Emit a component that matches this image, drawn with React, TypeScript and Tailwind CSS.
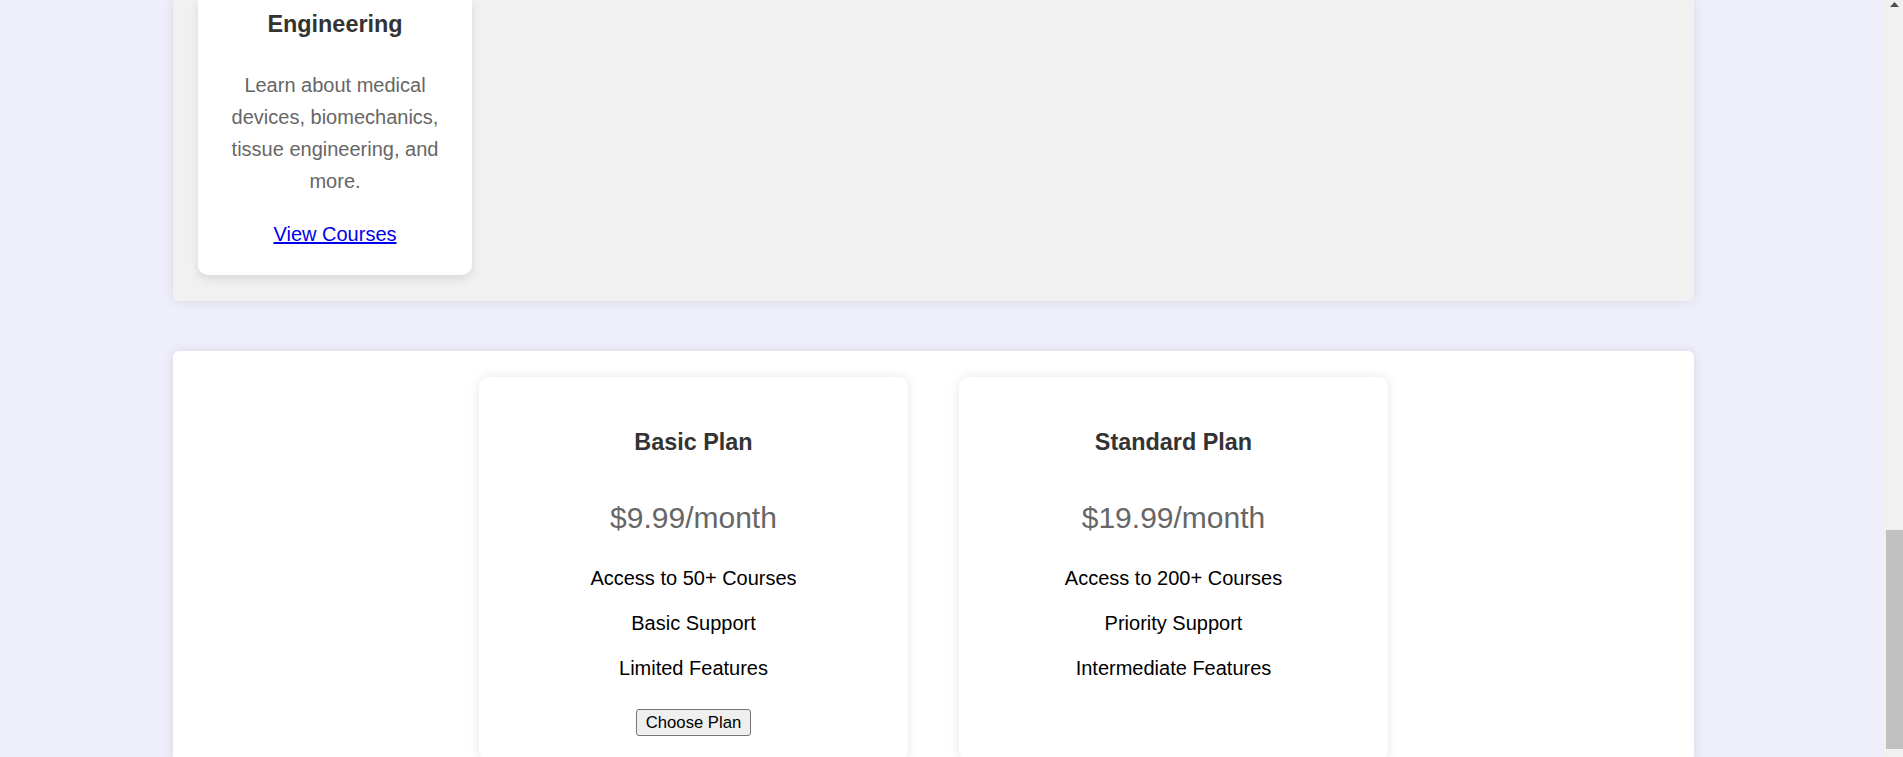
import React from "react";

const plans = [
  {
    name: "Basic Plan",
    price: "$9.99/month",
    features: ["Access to 50+ Courses", "Basic Support", "Limited Features"],
    button: true,
  },
  {
    name: "Standard Plan",
    price: "$19.99/month",
    features: ["Access to 200+ Courses", "Priority Support", "Intermediate Features"],
    button: false,
  },
];

export default function App() {
  return (
    <div className="flex h-[757px] overflow-hidden bg-[#efeffc] font-['Liberation_Sans',Arial,sans-serif]">
      <div className="flex min-w-0 flex-1 flex-col">
        {/* Course section (scrolled, top cut off) */}
        <section className="ml-[173px] w-[1521px] shrink-0 rounded-b-[6px] bg-[#f1f1f1] px-[25px] pb-[26px] shadow-[0_0_12px_rgba(0,0,0,0.1)]">
          <div className="w-[274px] rounded-b-[10px] bg-white px-[25px] pb-[25px] pt-[11px] text-center shadow-[0_4px_10px_rgba(0,0,0,0.1)]">
            <h3 className="text-[23.4px] font-bold leading-[27px] text-[#333]">Engineering</h3>
            <p className="mt-[31px] text-[20px] leading-[32px] text-[#666]">
              Learn about medical devices, biomechanics, tissue engineering, and more.
            </p>
            <p className="mt-[21px] text-[20px] leading-[32px]">
              <a href="#" className="text-[#0000ee] underline">
                View Courses
              </a>
            </p>
          </div>
        </section>

        {/* Pricing section */}
        <section className="ml-[173px] mt-[50px] flex w-[1521px] flex-1 justify-center gap-[51px] rounded-t-[6px] bg-white pt-[26px] shadow-[0_0_12px_rgba(0,0,0,0.1)]">
          {plans.map((p) => (
            <div
              key={p.name}
              className="flex w-[429px] shrink-0 flex-col items-center self-start rounded-[10px] bg-white px-[25px] pb-[25px] pt-[52px] text-center shadow-[0_0_12px_rgba(0,0,0,0.1)]"
            >
              <h3 className="text-[23.4px] font-bold leading-[27px] text-[#333]">{p.name}</h3>
              <div className="mt-[44px] text-[30px] leading-[35px] text-[#666]">{p.price}</div>
              <div className="mt-[21px] flex flex-col">
                {p.features.map((f) => (
                  <div key={f} className="text-[20px] leading-[45px] text-black">
                    {f}
                  </div>
                ))}
              </div>
              {p.button ? (
                <button className="mt-[18px] h-[27px] w-[115px] rounded-[3px] border border-[#767676] bg-[#efefef] text-[16.67px] leading-[20px] text-black">
                  Choose Plan
                </button>
              ) : (
                <div className="mt-[18px] h-[27px]" />
              )}
            </div>
          ))}
        </section>
      </div>

      {/* Browser scrollbar */}
      <div className="flex w-[19px] shrink-0 flex-col bg-[#f1f1f1]">
        <div className="flex justify-center pl-[2px] pt-[2px]">
          <svg width="9" height="5" viewBox="0 0 9 5">
            <polygon points="0,5 4.5,0 9,5" fill="#505050" />
          </svg>
        </div>
        <div className="flex-1" />
        <div className="mb-[8px] ml-[2px] h-[219px] w-[17px] bg-[#c1c1c1]" />
      </div>
    </div>
  );
}
